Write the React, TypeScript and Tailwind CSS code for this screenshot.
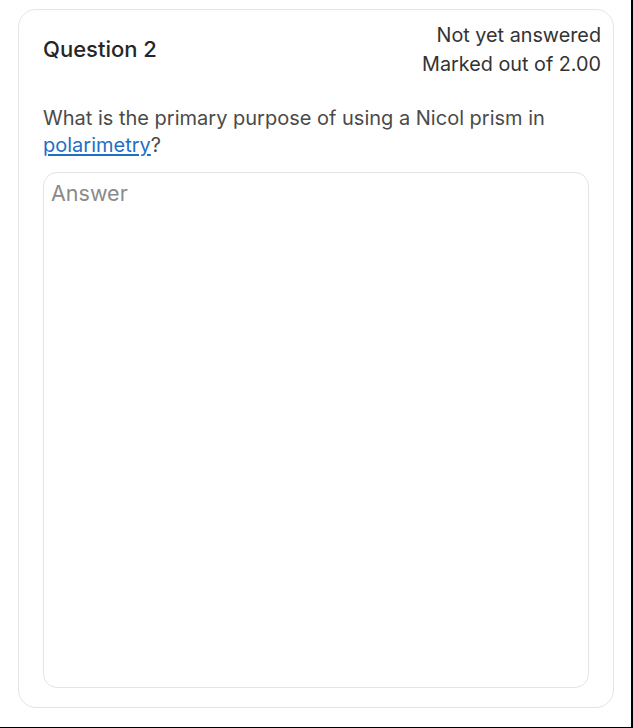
export default function App() {
  return (
    <div className="flex h-[728px] w-[633px] bg-black pb-px pr-[2px] font-['Inter',sans-serif]">
      <div className="flex flex-1 bg-white pl-[18px] pr-[17px] pb-[19px] pt-[9px]">
        <div className="flex flex-1 flex-col rounded-[18px] border border-[#e2e4e9] pb-[19px] pl-[24px] pr-[12px]">
          {/* Header */}
          <div className="flex items-start justify-between">
            <h2 className="mt-[27px] text-[22px] font-medium leading-[24px] text-[#262626]">Question 2</h2>
            <div className="mt-[11px] text-right text-[19.8px] leading-[29px] text-[#333]">
              <div>Not yet answered</div>
              <div>Marked out of 2.00</div>
            </div>
          </div>

          {/* Question text */}
          <p className="mt-[26px] pr-[30px] text-[20px] leading-[27px] text-[#4a4a4a]">
            What is the primary purpose of using a Nicol prism in{' '}
            <a href="#" className="text-[#1f6fc5] underline underline-offset-2">
              polarimetry
            </a>
            ?
          </p>

          {/* Answer box */}
          <textarea
            placeholder="Answer"
            className="mt-[13px] mr-[12px] flex-1 resize-none rounded-[14px] border border-[#e2e4e9] px-[7px] py-[6px] text-[21.5px] leading-[28px] text-[#333] outline-none placeholder:text-[#8a8a8a]"
          />
        </div>
      </div>
    </div>
  );
}
